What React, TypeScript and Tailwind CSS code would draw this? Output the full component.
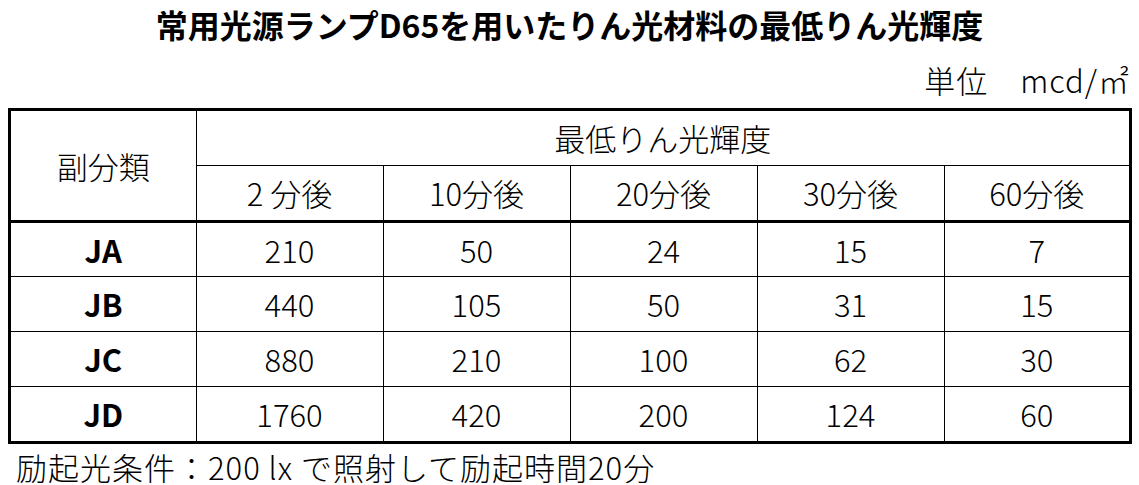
import React from "react";

const rows = [
  { name: "JA", values: ["210", "50", "24", "15", "7"] },
  { name: "JB", values: ["440", "105", "50", "31", "15"] },
  { name: "JC", values: ["880", "210", "100", "62", "30"] },
  { name: "JD", values: ["1760", "420", "200", "124", "60"] },
];

const times = ["2 分後", "10分後", "20分後", "30分後", "60分後"];

const App = () => {
  return (
    <div className="h-[485px] w-[1139px] overflow-hidden bg-white text-black font-light [font-family:'Noto_Sans_CJK_JP','Noto_Sans',sans-serif]">
      {/* TITLE */}
      <div className="flex h-[48px] items-center justify-center">
        <h1 className="text-[32px] font-bold leading-none">
          常用光源ランプD65を用いたりん光材料の最低りん光輝度
        </h1>
      </div>

      {/* UNIT */}
      <div className="flex h-[60px] items-center justify-end pr-[9px] pt-[2px]">
        <span className="text-[31px] leading-none tracking-[1px]">単位　mcd/㎡</span>
      </div>

      {/* TABLE */}
      <div className="ml-[8px] w-[1124px] border-[3px] border-black">
        <table className="w-full table-fixed border-collapse text-[31px] leading-none">
          <colgroup>
            <col className="w-[185px]" />
            <col className="w-[187px]" />
            <col className="w-[187px]" />
            <col className="w-[187px]" />
            <col className="w-[187px]" />
            <col />
          </colgroup>
          <thead>
            <tr className="h-[54px]">
              <th
                rowSpan={2}
                className="border-r-[1.5px] border-b-[3px] border-black text-center font-light"
              >
                副分類
              </th>
              <th
                colSpan={5}
                className="border-b-[1.5px] border-black text-center font-light"
              >
                最低りん光輝度
              </th>
            </tr>
            <tr className="h-[56px]">
              {times.map((t, i) => (
                <th
                  key={t}
                  className={
                    i === times.length - 1
                      ? "border-b-[3px] border-black text-center font-light"
                      : "border-r-[1.5px] border-b-[3px] border-black text-center font-light"
                  }
                >
                  {t}
                </th>
              ))}
            </tr>
          </thead>
          <tbody>
            {rows.map((row, r) => (
              <tr key={row.name} className="h-[55px]">
                <td
                  className={
                    r === rows.length - 1
                      ? "border-r-[1.5px] border-black text-center font-bold"
                      : "border-r-[1.5px] border-b-[1.5px] border-black text-center font-bold"
                  }
                >
                  {row.name}
                </td>
                {row.values.map((v, i) => (
                  <td
                    key={i}
                    className={
                      r === rows.length - 1
                        ? i === row.values.length - 1
                          ? "border-black text-center"
                          : "border-r-[1.5px] border-black text-center"
                        : i === row.values.length - 1
                          ? "border-b-[1.5px] border-black text-center"
                          : "border-r-[1.5px] border-b-[1.5px] border-black text-center"
                    }
                  >
                    {v}
                  </td>
                ))}
              </tr>
            ))}
          </tbody>
        </table>
      </div>

      {/* NOTE */}
      <p className="mt-[7px] pl-[16px] text-[31px] leading-none tracking-[1px]">
        励起光条件：200 lx で照射して励起時間20分
      </p>
    </div>
  );
};

export default App;
